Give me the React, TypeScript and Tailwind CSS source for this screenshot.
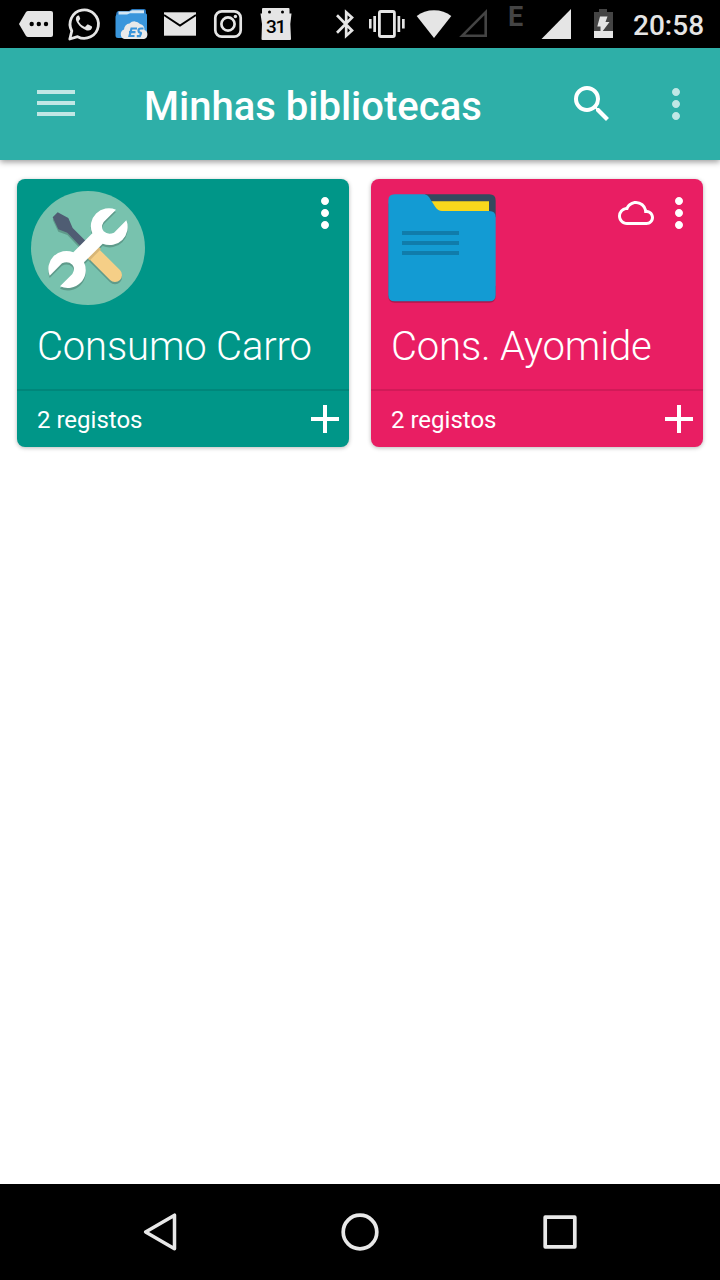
import type { ReactNode } from "react";
import { MdAdd, MdCloudQueue, MdMoreVert, MdSearch } from "react-icons/md";

function StatusBar() {
  return (
    <div className="flex h-12 shrink-0 items-center bg-black pl-3 text-[#e5e5e5]">
      <svg width="48" height="48" viewBox="12 0 48 48" fill="currentColor">
        <path d="M28 11H51a2 2 0 0 1 2 2V35a2 2 0 0 1-2 2H28q-1 0-2-1L19 24l7-12q1-1 2-1Z" />
        <g fill="#000">
          <circle cx="31.700" cy="24" r="2.200" />
          <circle cx="38.800" cy="24" r="2.200" />
          <circle cx="46" cy="24" r="2.200" />
        </g>
      </svg>
      <svg width="48" height="48" viewBox="60 0 48 48" fill="none">
        <path d="M70 39.200l2-8A14.200 14.200 0 1 1 77.800 36.900Z" stroke="currentColor" strokeWidth="2.800" strokeLinejoin="round" transform="translate(-.2 -.2)" />
        <path d="M79 15.500c-.7-.2-1.500 0-2 .6-1.700 2-1.400 4.400.4 7 2.300 3.500 5.200 6 9.400 7.300 2.700.8 5-.7 5.300-3.100 0-.5-.1-.8-.5-1l-3.500-1.700c-.5-.2-.9-.1-1.200.3l-1.400 1.700c-.3.4-.7.4-1.100.2-2.600-1.200-4.300-2.900-5.600-5.100-.2-.4-.1-.7.1-1l1.100-1.500c.2-.3.2-.7.100-1Z" fill="currentColor" />
      </svg>
      <svg width="48" height="48" viewBox="108 0 48 48">
        <path d="M118 11h11l3-2h12a2 2 0 0 1 2 2v3l1 1v20h-28q-3 0-3-3V15q0-3 2-4Z" fill="#2a78bd" />
        <path d="M118.500 11.500h11l2.500-1.200h12v5h-25.500Z" fill="#d3e6f4" />
        <path d="M115.500 17q0-2.500 2.500-2.500h9l3-1.200h15q2 0 2 2V36q0 2-2 2h-27q-2.500 0-2.500-2.500Z" fill="#3a96dc" />
        <path d="M124.500 39a5 5 0 0 1-.5-9.500 6 6 0 0 1 5.500-6 7 7 0 0 1 10.500.5 6 6 0 0 1 4.500 6 4.800 4.800 0 0 1-.5 9Z" fill="#e9e9e9" />
        <g fill="none" stroke="#3a96dc" strokeWidth="2.200">
          <path d="M137 28.500h-5.500l-2 7.500h5M129 32.200h6.500" />
          <path d="M143.500 28.500h-2.500q-2.500 0-2.500 2t1.700 2-.4 3.600h-3" />
        </g>
      </svg>
      <svg width="48" height="48" viewBox="156 0 48 48" fill="currentColor">
        <path d="M164 12.300H196V35.700H164Z" />
        <path d="M164 15l16 10.500L196 15" fill="none" stroke="#000" strokeWidth="2" />
      </svg>
      <svg width="48" height="48" viewBox="204 0 48 48" fill="none" stroke="currentColor" strokeWidth="2.700">
        <rect x="215.300" y="11.300" width="25.400" height="25.400" rx="6.500" />
        <circle cx="228" cy="24" r="6.600" />
        <circle cx="235.400" cy="16.500" r="1.700" fill="currentColor" stroke="none" />
      </svg>
      <div className="grid h-12 w-12 place-items-center">
        <svg className="col-start-1 row-start-1" width="48" height="48" viewBox="252 0 48 48" fill="currentColor">
          <path d="M262 9q0-1 1-1h25.500q1 0 1 1v4.500h2l-1.200 10.500.7 15q0 1-1 1h-27.500q-1 0-1-1l.5-15-1.500-10.500h1.500Z" />
          <circle cx="269.500" cy="12" r="1.500" fill="#000" />
          <circle cx="282.500" cy="12" r="1.500" fill="#000" />
        </svg>
        <span className="col-start-1 row-start-1 pt-1 pr-px text-[19px] leading-none font-medium tracking-[-1.2px] text-black">31</span>
      </div>
      <svg className="ml-6" width="42" height="48" viewBox="324 0 42 48" fill="none" stroke="currentColor" strokeWidth="2.700">
        <path d="M337 15.300L352 30.500l-5.800 5.200V12.300l5.800 5.200-15 15.200" />
      </svg>
      <svg width="45" height="48" viewBox="366 0 45 48" fill="currentColor">
        <path d="M369 19h2.600v9.500H369ZM373.300 16h2.700v16h-2.700ZM397.500 16h2.700v16h-2.700ZM402 19h2.700v9.500H402Z" />
        <rect x="379.400" y="11.500" width="15" height="25" rx="1.500" fill="none" stroke="currentColor" strokeWidth="2.800" />
      </svg>
      <svg width="45" height="48" viewBox="411 0 45 48" fill="currentColor">
        <path d="M434 38L416.700 16Q424 10.300 434 10.300T451.300 16Z" />
      </svg>
      <svg width="42" height="48" viewBox="456 0 42 48" fill="none" stroke="#444444" strokeWidth="2.600">
        <path d="M462.300 35.700H485.700V12.200Z" />
      </svg>
      <div className="h-12 w-9 pl-2.5 pt-0.5 text-[27px] leading-[30px] font-bold text-[#444444]">E</div>
      <svg width="48" height="48" viewBox="534 0 48 48" fill="currentColor">
        <path d="M541.500 39H571V9Z" />
      </svg>
      <svg width="42" height="48" viewBox="582 0 42 48">
        <path d="M599 9h8v3h6v26h-19V12h5Z" fill="#444444" />
        <path d="M594 31h19v7h-19Z" fill="#e5e5e5" />
        <path d="M600 16.500h7.500l-2 5.500h4L600.500 34v-7.500h-3.200Z" fill="#e5e5e5" />
      </svg>
      <time className="pt-1 pl-[9px] text-[28px] leading-none font-medium">20:58</time>
    </div>
  );
}

function AppBar() {
  return (
    <header className="z-10 flex h-28 shrink-0 items-center bg-[#2eafa8] pr-5 pl-[37px] text-white shadow-[0_2px_6px_rgba(0,0,0,0.4)]">
      <button className="flex w-[38px] flex-col gap-[7px] pb-0.5" aria-label="Menu">
        <span className="h-1 w-full bg-white/70" />
        <span className="h-1 w-full bg-white/70" />
        <span className="h-1 w-full bg-white/70" />
      </button>
      <h1 className="ml-[69px] pt-1.5 text-[40px] leading-none font-medium whitespace-nowrap">Minhas bibliotecas</h1>
      <MdSearch className="ml-auto size-12" />
      <MdMoreVert className="ml-9 size-12 text-white/70" />
    </header>
  );
}

function ToolsIcon() {
  const wrench =
    "M318 119L281 156Q271 172 281 184Q294 196 312 188L349 151A54 54 0 0 1 278 221L222 277A54 54 0 0 1 150 349L187 312Q197 296 187 284Q174 272 156 280L119 317A54 54 0 0 1 190 247L247 190A54 54 0 0 1 318 119Z";
  return (
    <svg width="114" height="114" viewBox="63 63 342 342">
      <circle cx="234" cy="234" r="171" fill="#78c2ae" />
      <g fill="#5f9b8b" transform="translate(0 7)">
        <path d="M143 127l32 17 13 30 42 42-16 16-42-44-27-10-17-36Z" />
        <path d="M250 250l65 65" stroke="#5f9b8b" strokeWidth="42" strokeLinecap="round" />
        <path d={wrench} />
      </g>
      <path d="M143 127l32 17 13 30 42 42-16 16-42-44-27-10-17-36Z" fill="#4f5d73" />
      <path d="M250 250l65 65" stroke="#f5cf87" strokeWidth="42" strokeLinecap="round" />
      <path d="M236 268l34-34" stroke="#d8b677" strokeWidth="9" />
      <path d={wrench} fill="#fff" />
    </svg>
  );
}

function FolderIcon() {
  return (
    <svg width="108" height="110" viewBox="54 72 324 330">
      <path d="M165 73h193q19 0 19 19v50H165Z" fill="#34495e" />
      <path d="M180 94H357V140H180Z" fill="#f8d71c" />
      <path d="M55 100V379q0 19 19 19h284q19 0 19-19v-30Z" fill="#000" opacity=".25" />
      <path d="M55 92q0-19 19-19h86q14 0 22 16l14 22q8 12 20 12h142q19 0 19 19v233q0 19-19 19H74q-19 0-19-19Z" fill="#139bd3" />
      <path d="M96 183H267v12H96ZM96 213H267v12H96ZM96 243H267v12H96Z" fill="#107cab" />
    </svg>
  );
}

type LibraryCardProps = { title: string; color: string; icon: ReactNode; iconPadding: string; cloud?: boolean };

function LibraryCard({ title, color, icon, iconPadding, cloud }: LibraryCardProps) {
  return (
    <article className={`flex h-[268px] w-[332px] flex-col overflow-hidden rounded-lg text-white shadow-[0_1px_4px_rgba(0,0,0,0.28)] ${color}`}>
      <div className="flex h-[138px] items-start">
        <div className={iconPadding}>{icon}</div>
        <div className="mt-2.5 ml-auto flex items-center">
          {cloud && <MdCloudQueue className="mr-[1px] size-9" />}
          <MdMoreVert className="size-12" />
        </div>
      </div>
      <h2 className="h-[72px] pl-5 text-[40px] leading-[60px] font-light tracking-[-0.15px] whitespace-nowrap">{title}</h2>
      <footer className="flex h-[58px] items-center justify-between border-t-2 border-black/10 pl-5">
        <span className="pt-0.5 text-2xl">2 registos</span>
        <MdAdd className="size-12" />
      </footer>
    </article>
  );
}

function NavigationBar() {
  return (
    <nav className="flex h-24 shrink-0 items-center justify-center gap-[152px] bg-black">
      <svg width="48" height="48" viewBox="136 1208 48 48" fill="none" stroke="#e8e8e8" strokeWidth="3.500" strokeLinejoin="round">
        <path d="M174.500 1215.200V1248.800L145.600 1232Z" />
      </svg>
      <svg width="48" height="48" viewBox="336 1208 48 48" fill="none" stroke="#e8e8e8" strokeWidth="3.700">
        <circle cx="360" cy="1232" r="16.800" />
      </svg>
      <svg width="48" height="48" viewBox="536 1208 48 48" fill="none" stroke="#e8e8e8" strokeWidth="3.700" strokeLinejoin="round">
        <rect x="545.200" y="1217.200" width="29.600" height="29.600" />
      </svg>
    </nav>
  );
}

export default function App() {
  return (
    <div className="flex h-[1280px] w-[720px] flex-col overflow-hidden bg-white font-['Roboto',sans-serif]">
      <StatusBar />
      <AppBar />
      <main className="flex flex-1 items-start gap-[22px] pt-[19px] pl-[17px]">
        <LibraryCard title="Consumo Carro" color="bg-[#009688]" icon={<ToolsIcon />} iconPadding="pt-3 pl-3.5" />
        <LibraryCard title="Cons. Ayomide" color="bg-[#e91e63]" icon={<FolderIcon />} iconPadding="pt-[15px] pl-[17px]" cloud />
      </main>
      <NavigationBar />
    </div>
  );
}
